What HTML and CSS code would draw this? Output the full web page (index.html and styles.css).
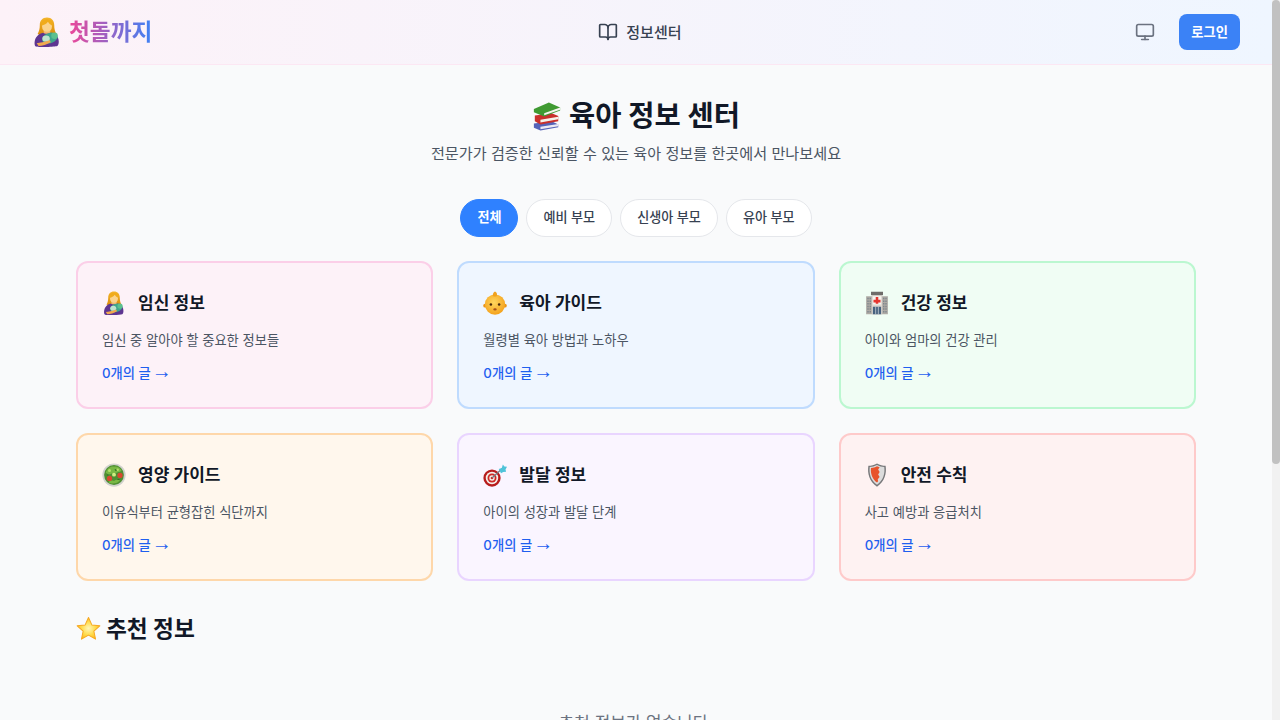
FILE: index.html
```html
<!DOCTYPE html>
<html lang="ko">
<head>
  <meta charset="UTF-8" />
  <meta name="viewport" content="width=device-width, initial-scale=1.0"/>
  <title>첫돌까지 - 육아 정보 센터</title>
  <link rel="stylesheet" href="styles.css">
</head>
<body>

  <!-- emoji drawings, used below -->
  <svg class="sprite" aria-hidden="true">
    <defs>
      <linearGradient id="g-hair" x1="0" y1="0" x2="0" y2="1"><stop offset="0" stop-color="#f4b62c"/><stop offset="1" stop-color="#d98a0a"/></linearGradient>
      <radialGradient id="g-baby" cx="0.45" cy="0.4" r="0.7"><stop offset="0" stop-color="#ffd75e"/><stop offset="1" stop-color="#f29a13"/></radialGradient>
      <radialGradient id="g-star" cx="0.5" cy="0.5" r="0.55"><stop offset="0" stop-color="#fff6b8"/><stop offset="0.55" stop-color="#ffdc4e"/><stop offset="1" stop-color="#fdb515"/></radialGradient>
    </defs>
    <symbol id="e-mother" viewBox="0 0 32 32">
      <path fill="url(#g-hair)" d="M16 .5c-5 0-7.700 3.500-7.700 8 0 4-.8 7-2.300 9.500 3 2.500 17 2.500 20 0-1.500-2.500-2.300-5.500-2.300-9.500 0-4.500-2.700-8-7.700-8z"/>
      <path fill="#f2b872" d="M12.500 13h7v6h-7z"/>
      <ellipse cx="16" cy="10" rx="5.300" ry="5.800" fill="#fbd38d"/>
      <path fill="#f0ab1c" d="M10 9c3-.3 5.500-1.700 7-4 1 2 3 3.600 5 4l-.5-5-5.500-2-5.500 2z"/>
      <path fill="#5e3591" d="M4 31.500c-2-1-1.500-7 .5-10 2-3 5-4.300 7.500-4.800 1 1.600 7 1.600 8 0 2.500.5 6 2 7.500 5 1.500 3 1.500 7.800-.5 9.300-3 1-19.500 1.500-22.500.5z"/>
      <ellipse cx="19" cy="22.500" rx="8.500" ry="5.500" fill="#3fa68c" transform="rotate(-18 19 22.500)"/>
      <circle cx="24" cy="20" r="3.500" fill="#5cc08f"/>
      <ellipse cx="15" cy="23" rx="4" ry="3.400" fill="#bfe3d0"/>
      <path fill="#f0a94f" d="M5 28c3-.5 9-1.500 14-3.500l1 2.500c-4 2.500-9 4-13 4z"/>
    </symbol>
    <symbol id="e-baby" viewBox="0 0 32 32">
      <circle cx="2.800" cy="19.500" r="2.500" fill="#eb9316"/>
      <circle cx="29.200" cy="19.500" r="2.500" fill="#eb9316"/>
      <circle cx="16" cy="18" r="13.500" fill="url(#g-baby)"/>
      <path fill="#f0a21e" d="M16 .5c2.300 1 3.300 3.300 2.300 6-1.200 1-3.800 1-5 0-.8-2.300.5-4.800 2.700-6z"/>
      <circle cx="10.500" cy="18" r="1.700" fill="#4a2a0a"/>
      <circle cx="21.500" cy="18" r="1.700" fill="#4a2a0a"/>
      <ellipse cx="16" cy="24.500" rx="2.300" ry="1.400" fill="#a8501a"/>
    </symbol>
    <symbol id="e-hospital" viewBox="0 0 32 32">
      <rect x="1.500" y="7" width="29" height="24" fill="#aeaaa4"/>
      <rect x="9" y="5" width="14" height="26" fill="#dcd7d0"/>
      <rect x="8" y="1" width="16" height="4.500" fill="#6e6c69"/>
      <rect x="10.500" y="7" width="11" height="11" fill="#f6f3ee"/>
      <path fill="#e5352f" d="M14.300 8h3.400v3.800h3v3.400h-3V17h-3.400v-1.800h-3v-3.400h3z"/>
      <rect x="10.500" y="21" width="11" height="10" fill="#47627f"/>
      <path stroke="#f0f0f0" stroke-width=".8" d="M14.200 21v10M17.800 21v10"/>
      <path stroke="#76818a" stroke-width="1.600" stroke-dasharray="2 1.500" d="M4 9v21M7 9v21M25 9v21M28 9v21"/>
    </symbol>
    <symbol id="e-salad" viewBox="0 0 32 32">
      <circle cx="16" cy="16" r="15.500" fill="#d2d2ce"/>
      <circle cx="16" cy="16" r="13.200" fill="#4f8f33"/>
      <path fill="#79b844" d="M5 13c2-6 7-9 11-8 3-1 8 1 10 5-2 3-4 1-6 3-3-1-4 3-7 1-2 2-5 1-8-1zM9 26c1-3 4-3 7-2 2-2 6-2 8-1-2 4-11 6-15 3z"/>
      <path fill="#2f6e25" d="M17 8c2 0 3 1 3 2-1 1-3 1-3-2zM6 16c1-1 2-1 3 0-1 1-2 1-3 0zM20 22c1-1 3-1 4 0-1 1-3 1-4 0z"/>
      <circle cx="10" cy="10" r="2" fill="#b4e06a"/>
      <circle cx="21" cy="9" r="1.600" fill="#b4e06a"/>
      <circle cx="10" cy="20.500" r="3.500" fill="#d9492f"/>
      <circle cx="24" cy="16.500" r="3.500" fill="#d9492f"/>
      <circle cx="16" cy="15.500" r="2.600" fill="#d0ec82"/>
    </symbol>
    <symbol id="e-target" viewBox="0 0 32 32">
      <circle cx="12" cy="20" r="11.500" fill="#b71c1c"/>
      <circle cx="12" cy="20" r="8.300" fill="#f4efe9"/>
      <circle cx="12" cy="20" r="6" fill="#cf2a27"/>
      <circle cx="12" cy="20" r="3.600" fill="#f4efe9"/>
      <circle cx="12" cy="20" r="1.800" fill="#cf2a27"/>
      <path stroke="#6f7c85" stroke-width="1.400" d="M12 20L26 7"/>
      <path fill="#4fc3d9" d="M21 8l4-1.500L26.500 2l2 2.500L32 5l-2 3.500.8 3-3.800.5-3 1.800z"/>
    </symbol>
    <symbol id="e-shield" viewBox="0 0 32 32">
      <path fill="#77787a" d="M16 .5c3.500 2 8 3 11.500 3.200C29 14 26.500 24.500 16 31.500 5.500 24.500 3 14 4.500 3.700 8 3.500 12.500 2.500 16 .5z"/>
      <path fill="#dcdcdc" d="M16 2.500c3 1.700 6.600 2.500 9.700 2.800C26.800 14 24.500 23 16 29 7.500 23 5.200 14 6.300 5.300 9.400 5 13 4.200 16 2.500z"/>
      <path fill="#e8532b" d="M8 6.500c3-.3 5.500-1 8-2.300l3.500 1.500-2 3 2 3.300-2 3.200 2 3.300-2.500 3.200.5 2.500L16 26C9.500 21 7.200 14 8 6.500z"/>
    </symbol>
    <symbol id="e-star" viewBox="0 0 32 32">
      <path fill="url(#g-star)" stroke="#f6a823" stroke-width="1.300" stroke-linejoin="round" d="M16 2l4.300 9.400 10.200 1.200-7.600 6.900 2.100 10.100L16 24.500 7 29.600l2.100-10.100-7.600-6.900 10.200-1.200z"/>
    </symbol>
    <symbol id="e-books" viewBox="0 0 32 32">
      <path fill="#5563b8" d="M2 24l19-2.500 7 3.500v3L9 31.500l-7-3z"/>
      <path fill="#eceaf4" d="M9 27.500l19-3v2.300L9 30z"/>
      <path fill="#c9302c" d="M3 15.500l18-2.500 7 3v5.500L9 25l-6-3.500z"/>
      <path fill="#f6f2ea" d="M9 20l19-3.300v2.800L9 23z"/>
      <path fill="#3f9a32" d="M2 8.500L18 1.500l12 5.500v3l-17 6.500L2 12z"/>
      <path fill="#f6f6f0" d="M13 13l17-6v2.200l-17 6z"/>
    </symbol>
  </svg>

  <header class="site-header">
    <a class="logo" href="#">
      <svg class="logo-emoji" role="img" aria-label="🤱"><use href="#e-mother"/></svg>
      <span class="logo-text">첫돌까지</span>
    </a>
    <nav class="main-nav">
      <a class="nav-link" href="#">
        <svg class="nav-icon" viewBox="0 0 24 24" fill="none" stroke="currentColor" stroke-width="2" stroke-linecap="round" stroke-linejoin="round">
          <path d="M12 7v14"/>
          <path d="M3 18a1 1 0 0 1-1-1V4a1 1 0 0 1 1-1h5a4 4 0 0 1 4 4 4 4 0 0 1 4-4h5a1 1 0 0 1 1 1v13a1 1 0 0 1-1 1h-6a3 3 0 0 0-3 3 3 3 0 0 0-3-3z"/>
        </svg>
        <span class="nav-text">정보센터</span>
      </a>
    </nav>
    <div class="header-actions">
      <button class="theme-btn" type="button" aria-label="테마">
        <svg class="theme-icon" viewBox="0 0 24 24" fill="none" stroke="currentColor" stroke-width="2" stroke-linecap="round" stroke-linejoin="round">
          <rect x="2" y="3" width="20" height="14" rx="2"/>
          <path d="M8 21h8"/>
          <path d="M12 17v4"/>
        </svg>
      </button>
      <button class="login-btn" type="button">로그인</button>
    </div>
  </header>

  <main class="content">
    <section class="hero">
      <h1><svg class="hero-emoji" role="img" aria-label="📚"><use href="#e-books"/></svg>육아 정보 센터</h1>
      <p>전문가가 검증한 신뢰할 수 있는 육아 정보를 한곳에서 만나보세요</p>
    </section>

    <div class="filters">
      <button class="filter active" type="button">전체</button>
      <button class="filter" type="button">예비 부모</button>
      <button class="filter" type="button">신생아 부모</button>
      <button class="filter" type="button">유아 부모</button>
    </div>

    <section class="card-grid">
      <a class="card card-pink" href="#">
        <div class="card-head"><svg class="card-emoji" role="img" aria-label="🤱"><use href="#e-mother"/></svg><h3>임신 정보</h3></div>
        <p>임신 중 알아야 할 중요한 정보들</p>
        <span class="card-count">0개의 글<span class="arrow">→</span></span>
      </a>
      <a class="card card-blue" href="#">
        <div class="card-head"><svg class="card-emoji" role="img" aria-label="👶"><use href="#e-baby"/></svg><h3>육아 가이드</h3></div>
        <p>월령별 육아 방법과 노하우</p>
        <span class="card-count">0개의 글<span class="arrow">→</span></span>
      </a>
      <a class="card card-green" href="#">
        <div class="card-head"><svg class="card-emoji" role="img" aria-label="🏥"><use href="#e-hospital"/></svg><h3>건강 정보</h3></div>
        <p>아이와 엄마의 건강 관리</p>
        <span class="card-count">0개의 글<span class="arrow">→</span></span>
      </a>
      <a class="card card-orange" href="#">
        <div class="card-head"><svg class="card-emoji" role="img" aria-label="🥗"><use href="#e-salad"/></svg><h3>영양 가이드</h3></div>
        <p>이유식부터 균형잡힌 식단까지</p>
        <span class="card-count">0개의 글<span class="arrow">→</span></span>
      </a>
      <a class="card card-purple" href="#">
        <div class="card-head"><svg class="card-emoji" role="img" aria-label="🎯"><use href="#e-target"/></svg><h3>발달 정보</h3></div>
        <p>아이의 성장과 발달 단계</p>
        <span class="card-count">0개의 글<span class="arrow">→</span></span>
      </a>
      <a class="card card-red" href="#">
        <div class="card-head"><svg class="card-emoji" role="img" aria-label="🛡️"><use href="#e-shield"/></svg><h3>안전 수칙</h3></div>
        <p>사고 예방과 응급처치</p>
        <span class="card-count">0개의 글<span class="arrow">→</span></span>
      </a>
    </section>

    <section class="featured">
      <h2><svg class="star-emoji" role="img" aria-label="⭐"><use href="#e-star"/></svg>추천 정보</h2>
      <p class="empty">추천 정보가 없습니다</p>
    </section>
  </main>

  <!-- page scrollbar -->
  <div class="scrollbar"><div class="scrollbar-thumb"></div></div>

</body>
</html>
```

FILE: styles.css
```css
* { margin: 0; padding: 0; box-sizing: border-box; }
body {
  font-family: Inter, "Noto Sans CJK KR", sans-serif;
  background: #f9fafb;
  color: #111827;
  padding-right: 8px;
  min-height: 1117px;
}
a { text-decoration: none; color: inherit; }
button { font-family: inherit; cursor: pointer; border: none; }
.sprite { position: absolute; width: 0; height: 0; }

.scrollbar {
  position: fixed;
  top: 0;
  right: 0;
  width: 8px;
  height: 100vh;
  background: #f1f1f1;
}
.scrollbar-thumb {
  height: 464px;
  background: #c1c1c1;
  border-radius: 4px;
}

.site-header {
  height: 65px;
  display: flex;
  align-items: center;
  justify-content: space-between;
  padding: 0 32px;
  background: linear-gradient(to right, #fdf2f8, #eff6ff);
  border-bottom: 1px solid #fce7f3;
}
.logo { display: flex; align-items: center; gap: 7px; }
.logo-emoji { width: 30px; height: 30px; }
.logo-text {
  font-size: 22.7px;
  font-weight: 700;
  line-height: 32px;
  background: linear-gradient(to right, #ec4899, #3b82f6);
  -webkit-background-clip: text;
  background-clip: text;
  color: transparent;
}
.nav-link {
  display: flex;
  align-items: center;
  gap: 8px;
  font-size: 15px;
  font-weight: 500;
  color: #374151;
}
.nav-text { margin-top: -2px; }
.nav-icon { width: 20px; height: 20px; }
.header-actions { display: flex; align-items: center; gap: 16px; }
.theme-btn {
  width: 36px;
  height: 36px;
  display: flex;
  align-items: center;
  justify-content: center;
  background: none;
  color: #6b7280;
}
.theme-icon { width: 20px; height: 20px; }
.login-btn {
  height: 36px;
  padding: 0 12px 2px;
  background: #3b82f6;
  color: #fff;
  font-size: 13.3px;
  font-weight: 600;
  border-radius: 8px;
}

.content {
  max-width: 1200px;
  margin: 0 auto;
  padding: 33px 40px 32px;
}
.hero { text-align: center; margin-bottom: 32.5px; }
.hero h1 {
  display: flex;
  align-items: center;
  justify-content: center;
  gap: 7px;
  font-size: 28.5px;
  font-weight: 700;
  line-height: 36px;
  margin-bottom: 8px;
}
.hero-emoji { width: 30px; height: 30px; }
.hero p { font-size: 15.15px; line-height: 24px; color: #4b5563; }

.filters { display: flex; justify-content: center; gap: 8px; margin-bottom: 24px; }
.filter {
  height: 38px;
  padding: 0 16px 2px;
  border: 1px solid #e5e7eb;
  border-radius: 19px;
  background: #fff;
  color: #374151;
  font-size: 13.1px;
  font-weight: 500;
}
.filter.active { background: #2f81ff; border-color: #2f81ff; color: #fff; font-weight: 600; }

.card-grid {
  display: grid;
  grid-template-columns: repeat(3, 1fr);
  gap: 24px;
  margin-bottom: 32px;
}
.card {
  display: block;
  height: 148px;
  padding: 24px;
  border: 2px solid;
  border-radius: 12px;
}
.card-head { display: flex; align-items: center; gap: 12px; margin-bottom: 11px; }
.card-emoji { width: 24px; height: 24px; margin: 4px 0; }
.card h3 { font-size: 17px; font-weight: 600; line-height: 28px; }
.card p { font-size: 13.25px; line-height: 20px; color: #4b5563; margin-bottom: 13px; }
.card-count { display: block; font-size: 13.3px; font-weight: 500; line-height: 20px; color: #1f5fef; }
.arrow { margin-left: 1px; font-family: "Liberation Sans", sans-serif; font-size: 20px; font-weight: 400; line-height: 0; }
.card-pink { background: #fdf2f8; border-color: #fbcfe8; }
.card-blue { background: #eff6ff; border-color: #bfdbfe; }
.card-green { background: #f0fdf4; border-color: #bbf7d0; }
.card-orange { background: #fff7ed; border-color: #fed7aa; }
.card-purple { background: #faf5ff; border-color: #e9d5ff; }
.card-red { background: #fef2f2; border-color: #fecaca; }

.featured h2 {
  display: flex;
  align-items: center;
  gap: 5px;
  font-size: 22.7px;
  font-weight: 700;
  line-height: 32px;
  margin-bottom: 64px;
}
.star-emoji { width: 25px; height: 25px; }
.empty { padding-right: 5px; text-align: center; font-size: 16.9px; line-height: 28px; color: #6b7280; }
```
